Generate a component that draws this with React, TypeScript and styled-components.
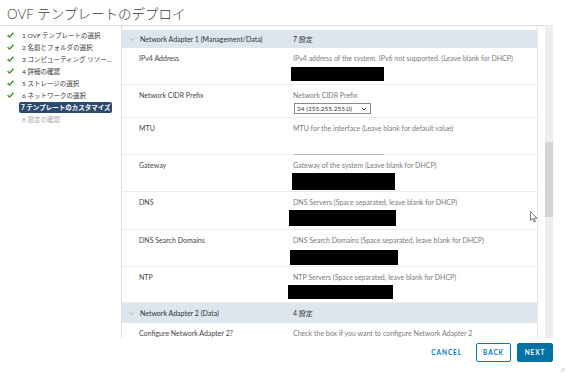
import React from "react";
import styled, { createGlobalStyle } from "styled-components";

const Global = createGlobalStyle`
  html, body { margin: 0; padding: 0; background: #fff; }
  body { font-family: "Lato", "Noto Sans CJK JP", sans-serif; }
  * { box-sizing: border-box; }
`;

const JP = `"Lato", "Noto Sans CJK JP", sans-serif`;

const Page = styled.div`
  position: relative;
  width: 566px;
  height: 374px;
  overflow: hidden;
  background: #fff;
  display: flex;
  flex-direction: column;
`;

const TitleBar = styled.div`
  height: 26px;
  border-bottom: 1px solid #dcdcdc;
  padding: 6px 0 0 7px;
  font-family: ${JP};
  font-size: 13.5px;
  font-weight: 300;
  color: #3a3a3a;
  line-height: 16px;
  width: 553px;
`;

const Body = styled.div`
  display: flex;
  height: 312px;
`;

const Nav = styled.div`
  width: 122px;
  border-right: 1px solid #e0e0e0;
  padding-top: 3px;
  display: flex;
  flex-direction: column;
`;

const NavItem = styled.div<{ $state: "done" | "active" | "todo" }>`
  display: flex;
  align-items: center;
  height: 12px;
  padding-left: 7px;
  font-family: ${JP};
  font-size: 6.5px;
  white-space: nowrap;
  color: ${(p) => (p.$state === "todo" ? "#a8a8a8" : "#333")};
`;

const Check = styled.span`
  width: 13px;
  display: inline-flex;
  align-items: center;
`;

const NavLabel = styled.span<{ $active?: boolean }>`
  display: inline-block;
  max-width: ${(p) => (p.$active ? 96 : 95)}px;
  overflow: hidden;
  text-overflow: ellipsis;
  padding: 0 2px;
  ${(p) =>
    p.$active
      ? `background:#2b4a6e;color:#fff;font-weight:700;border-radius:2px;height:11px;line-height:11px;margin-left:-1px;`
      : ``}
`;

const Main = styled.div`
  flex: 1;
  display: flex;
  padding-right: 13px;
`;

const TableArea = styled.div`
  width: 416px;
  padding-top: 4px;
  border-right: 1px solid #e6e6e6;
  display: flex;
  flex-direction: column;
  overflow: hidden;
`;

const GroupHeader = styled.div<{ $h: number }>`
  height: ${(p) => p.$h}px;
  flex-shrink: 0;
  background: #dde5ed;
  display: grid;
  grid-template-columns: 171px 1fr;
  align-items: center;
  font-family: ${JP};
  font-size: 7px;
  color: #333;
`;

const HeaderName = styled.div`
  display: flex;
  align-items: center;
  padding-left: 7px;
  gap: 6px;
`;

const Row = styled.div<{ $h: number }>`
  height: ${(p) => p.$h}px;
  flex-shrink: 0;
  border-bottom: 1px solid #ececec;
  display: grid;
  grid-template-columns: 171px 1fr;
  font-family: ${JP};
  font-size: 7px;
`;

const Label = styled.div`
  padding: 6px 0 0 17px;
  color: #454545;
  line-height: 9px;
`;

const Field = styled.div`
  padding-top: 6px;
  display: flex;
  flex-direction: column;
  align-items: flex-start;
`;

const Desc = styled.div`
  color: #7a7a7a;
  line-height: 9px;
  font-size: 7px;
  white-space: nowrap;
`;

const Redact = styled.div<{ $w: number; $h: number; $t: number; $l: number }>`
  background: #000;
  width: ${(p) => p.$w}px;
  height: ${(p) => p.$h}px;
  margin-top: ${(p) => p.$t}px;
  margin-left: ${(p) => p.$l}px;
`;

const Select = styled.div`
  margin-top: 3px;
  margin-left: 1px;
  width: 77px;
  height: 11px;
  border: 1px solid #8a8a8a;
  display: flex;
  align-items: center;
  justify-content: space-between;
  padding: 0 3px 0 2px;
  color: #333;
  font-size: 6.5px;
`;

const Underline = styled.div`
  margin-top: 21px;
  margin-left: 1px;
  width: 90px;
  height: 1px;
  background: #b8b8b8;
`;

const Scrollbar = styled.div`
  margin-left: 7px;
  width: 8px;
  margin-top: -1px;
  background: #eeeeee;
  display: flex;
  flex-direction: column;
`;

const Thumb = styled.div`
  margin-top: 117px;
  height: 75px;
  background: #d4d4d4;
`;

const Footer = styled.div`
  height: 36px;
  display: flex;
  align-items: flex-start;
  justify-content: flex-end;
  padding: 5px 13px 0 0;
  gap: 6px;
  font-family: "Lato", sans-serif;
`;

const Button = styled.button<{ $kind: "flat" | "outline" | "solid" }>`
  height: 19px;
  width: ${(p) => (p.$kind === "flat" ? "auto" : p.$kind === "outline" ? "35px" : "36px")};
  padding: 0;
  border-radius: 2px;
  font-family: "Lato", sans-serif;
  font-size: 6.5px;
  font-weight: 700;
  letter-spacing: 0.9px;
  cursor: pointer;
  color: ${(p) => (p.$kind === "solid" ? "#fff" : "#0079b8")};
  background: ${(p) => (p.$kind === "solid" ? "#0072a3" : "#fff")};
  border: 1px solid ${(p) => (p.$kind === "flat" ? "transparent" : p.$kind === "outline" ? "#0079b8" : "#0072a3")};
  margin-right: ${(p) => (p.$kind === "flat" ? "7px" : "0")};
`;

const Cursor = styled.svg`
  position: absolute;
  left: 530px;
  top: 211px;
`;

const Grip = styled.svg`
  position: absolute;
  right: 1px;
  bottom: 2px;
`;

const CheckIcon = () => (
  <svg width="7" height="6" viewBox="0 0 7 6">
    <path d="M0.6 3.2 L2.6 5 L6.4 0.8" stroke="#3f8f2a" strokeWidth="1.4" fill="none" />
  </svg>
);

const Chevron = () => (
  <svg width="5" height="3" viewBox="0 0 5 3">
    <path d="M0.5 0.5 L2.5 2.5 L4.5 0.5" stroke="#9a9a9a" strokeWidth="0.8" fill="none" />
  </svg>
);

const SelChevron = () => (
  <svg width="6" height="4" viewBox="0 0 6 4">
    <path d="M0.8 0.8 L3 3 L5.2 0.8" stroke="#333" strokeWidth="1" fill="none" />
  </svg>
);

const steps: { n: string; s: "done" | "active" | "todo" }[] = [
  { n: "1 OVF テンプレートの選択", s: "done" },
  { n: "2 名前とフォルダの選択", s: "done" },
  { n: "3 コンピューティング リソースの選択", s: "done" },
  { n: "4 詳細の確認", s: "done" },
  { n: "5 ストレージの選択", s: "done" },
  { n: "6 ネットワークの選択", s: "done" },
  { n: "7 テンプレートのカスタマイズ", s: "active" },
  { n: "8 設定の確認", s: "todo" },
];

type R = {
  label: string;
  desc: string;
  h: number;
  kind: "redact" | "select" | "line";
  box?: { w: number; h: number; t: number; l: number };
};

const rows: R[] = [
  { label: "IPv4 Address", desc: "IPv4 address of the system. IPv6 not supported. (Leave blank for DHCP)", h: 37, kind: "redact", box: { w: 93, h: 14, t: 4, l: -2 } },
  { label: "Network CIDR Prefix", desc: "Network CIDR Prefix", h: 33, kind: "select" },
  { label: "MTU", desc: "MTU for the interface (Leave blank for default value)", h: 37, kind: "line" },
  { label: "Gateway", desc: "Gateway of the system (Leave blank for DHCP)", h: 37, kind: "redact", box: { w: 103, h: 17, t: 3, l: -1 } },
  { label: "DNS", desc: "DNS Servers (Space separated, leave blank for DHCP)", h: 38, kind: "redact", box: { w: 107, h: 16, t: 3, l: -4 } },
  { label: "DNS Search Domains", desc: "DNS Search Domains (Space separated, leave blank for DHCP)", h: 37, kind: "redact", box: { w: 108, h: 15, t: 5, l: -3 } },
  { label: "NTP", desc: "NTP Servers (Space separated, leave blank for DHCP)", h: 36, kind: "redact", box: { w: 105, h: 14, t: 3, l: -5 } },
];

export default function App() {
  return (
    <Page>
      <Global />
      <TitleBar>OVF テンプレートのデプロイ</TitleBar>
      <Body>
        <Nav>
          {steps.map((st) => (
            <NavItem key={st.n} $state={st.s}>
              <Check>{st.s === "done" ? <CheckIcon /> : null}</Check>
              <NavLabel $active={st.s === "active"}>{st.n}</NavLabel>
            </NavItem>
          ))}
        </Nav>
        <Main>
          <TableArea>
            <GroupHeader $h={18}>
              <HeaderName>
                <Chevron />
                <span>Network Adapter 1 (Management/Data)</span>
              </HeaderName>
              <span>7 設定</span>
            </GroupHeader>
            {rows.map((r) => (
              <Row key={r.label} $h={r.h}>
                <Label>{r.label}</Label>
                <Field>
                  <Desc>{r.desc}</Desc>
                  {r.kind === "redact" && r.box && (
                    <Redact $w={r.box.w} $h={r.box.h} $t={r.box.t} $l={r.box.l} />
                  )}
                  {r.kind === "select" && (
                    <Select>
                      <span>24 (255.255.255.0)</span>
                      <SelChevron />
                    </Select>
                  )}
                  {r.kind === "line" && <Underline />}
                </Field>
              </Row>
            ))}
            <GroupHeader $h={20}>
              <HeaderName>
                <Chevron />
                <span>Network Adapter 2 (Data)</span>
              </HeaderName>
              <span>4 設定</span>
            </GroupHeader>
            <Row $h={20}>
              <Label>Configure Network Adapter 2?</Label>
              <Field>
                <Desc>Check the box if you want to configure Network Adapter 2</Desc>
              </Field>
            </Row>
          </TableArea>
          <Scrollbar>
            <Thumb />
          </Scrollbar>
        </Main>
      </Body>
      <Footer>
        <Button $kind="flat">CANCEL</Button>
        <Button $kind="outline">BACK</Button>
        <Button $kind="solid">NEXT</Button>
      </Footer>
      <Cursor width="8" height="12" viewBox="0 0 8 12">
        <path d="M0.5 0.5 L0.5 9.5 L2.6 7.6 L4 11 L5.4 10.4 L4 7.2 L7 7.2 Z" fill="#fff" stroke="#555" strokeWidth="0.8" />
      </Cursor>
      <Grip width="5" height="5" viewBox="0 0 5 5">
        <path d="M4.5 1 L1 4.5 M4.5 3 L3 4.5" stroke="#999" strokeWidth="0.7" />
      </Grip>
    </Page>
  );
}
